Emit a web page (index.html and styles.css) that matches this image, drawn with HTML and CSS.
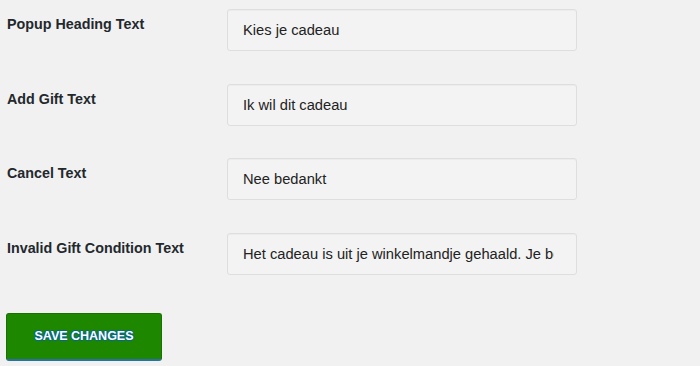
FILE: index.html
```html
<!DOCTYPE html>
<html lang="en">
<head>
    <meta charset="UTF-8">
    <title>Gift Settings</title>
    <link rel="stylesheet" href="styles.css">
</head>
<body>
    <form class="settings-form">
        <div class="form-row">
            <label class="form-label" for="popupHeading">Popup Heading Text</label>
            <input class="form-input" type="text" id="popupHeading" value="Kies je cadeau">
        </div>
        <div class="form-row">
            <label class="form-label" for="addGift">Add Gift Text</label>
            <input class="form-input" type="text" id="addGift" value="Ik wil dit cadeau">
        </div>
        <div class="form-row">
            <label class="form-label" for="cancelText">Cancel Text</label>
            <input class="form-input" type="text" id="cancelText" value="Nee bedankt">
        </div>
        <div class="form-row">
            <label class="form-label" for="invalidGift">Invalid Gift Condition Text</label>
            <input class="form-input" type="text" id="invalidGift" value="Het cadeau is uit je winkelmandje gehaald. Je bent niet meer in aanmerking">
        </div>
        <div class="submit-container">
            <button class="save-button" type="button">Save Changes</button>
        </div>
    </form>
</body>
</html>
```

FILE: styles.css
```css
body {
    margin: 0;
    background-color: #f1f1f1;
    font-family: "Liberation Sans", Arial, sans-serif;
    color: #23282d;
}
.settings-form {
    padding: 9px 0 0 7px;
}
.form-row {
    display: flex;
    align-items: flex-start;
    height: 74.7px;
}
.form-label {
    width: 220px;
    margin-top: 5px;
    font-size: 14.3px;
    line-height: 20px;
    font-weight: bold;
    color: #23282d;
}
.form-input {
    box-sizing: border-box;
    width: 350px;
    height: 42px;
    margin: 0;
    padding: 0 22.5px 0 15px;
    border: 1px solid #dedede;
    border-radius: 3px;
    background-color: #f3f3f3;
    box-shadow: inset 0 1px 1px rgba(0, 0, 0, 0.03);
    font-family: "Liberation Sans", Arial, sans-serif;
    font-size: 14.7px;
    color: #222;
    outline: none;
}
.submit-container {
    margin-top: 5px;
    margin-left: -1px;
}
.save-button {
    width: 156px;
    height: 48px;
    background-color: #1e8700;
    border: 1px solid #197200;
    border-bottom: 2px solid #2b6fa8;
    border-radius: 3px;
    color: #fff;
    font-family: "Liberation Sans", Arial, sans-serif;
    font-size: 12.5px;
    font-weight: bold;
    text-transform: uppercase;
    text-shadow: 0 -1px 1px #006799, 1px 0 1px #006799, 0 1px 1px #006799, -1px 0 1px #006799;
    cursor: pointer;
}
```
